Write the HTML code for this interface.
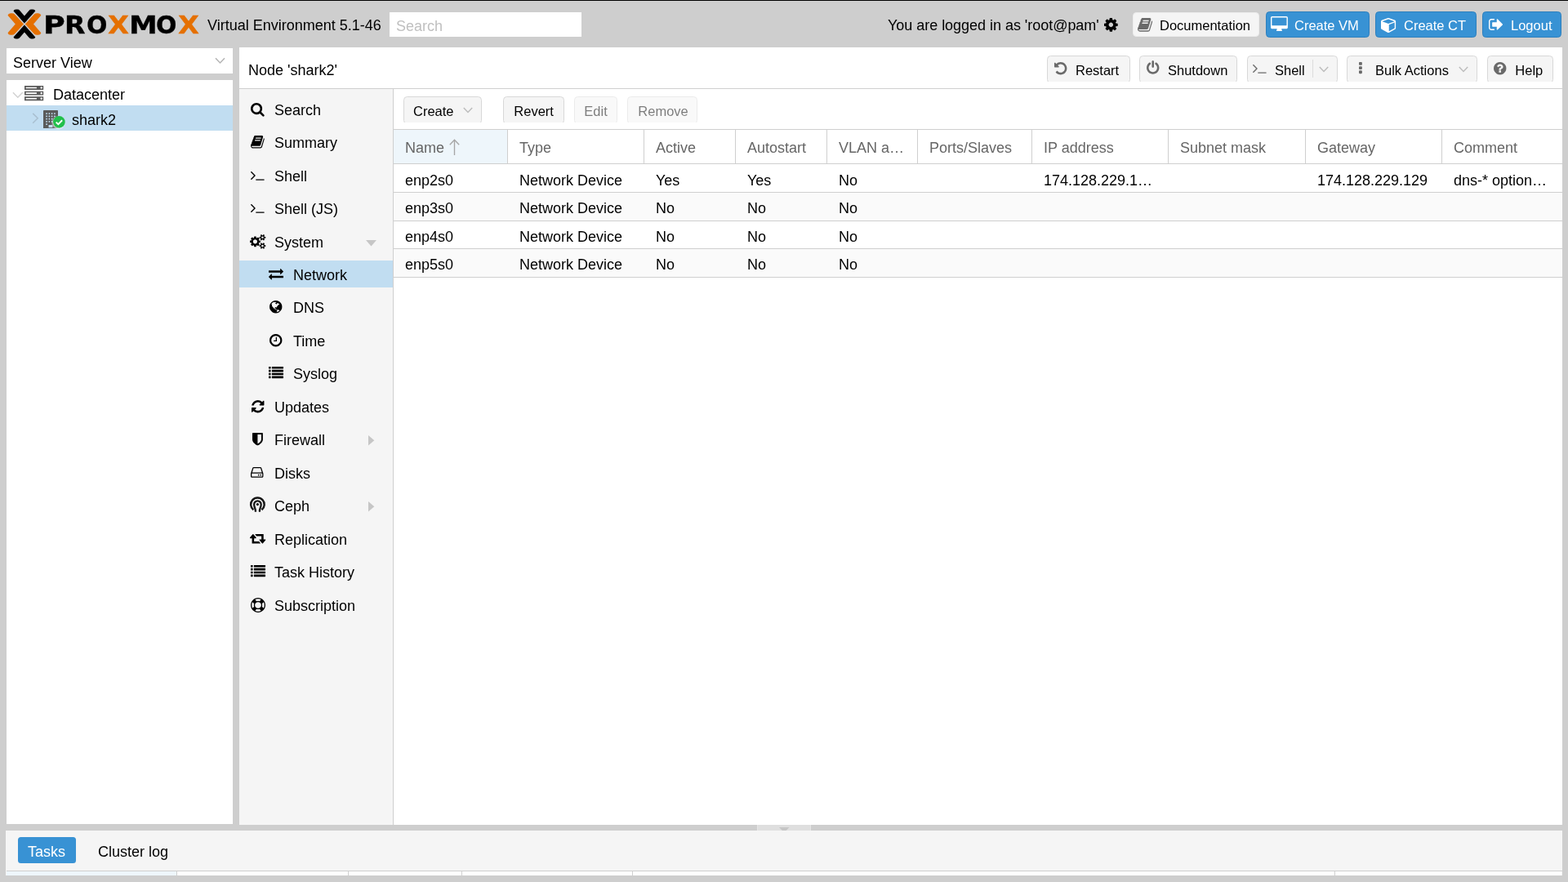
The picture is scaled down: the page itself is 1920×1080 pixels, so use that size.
<!DOCTYPE html>
<html lang="en">
<head>
<meta charset="utf-8">
<title>shark2 - Proxmox Virtual Environment</title>
<style>
html,body{margin:0;padding:0;}
body{width:1920px;height:1080px;overflow:hidden;position:relative;background:#cecece;
 font-family:"Liberation Sans",sans-serif;font-size:18px;line-height:18px;color:#000;}
#app{position:absolute;left:0;top:0;width:1920px;height:1080px;overflow:hidden;will-change:transform;}
#app div,#app svg,.g{position:absolute;box-sizing:border-box;}
.g{left:0;top:0;width:0;height:0;}
#app .in{position:static;}
.t{white-space:nowrap;}
.i{display:block;overflow:visible;}
.btn{background:#f5f5f5;border:1px solid #d8d8d8;border-radius:4.5px;}
.btnb{background:#3892d4;border:1px solid #2d7fbd;border-radius:4.5px;}
.dis{opacity:.5;}
.logo{font-family:"DejaVu Sans","Liberation Sans",sans-serif;font-weight:bold;font-size:30px;line-height:30px;}
.logo span{position:absolute;display:block;transform-origin:0 0;white-space:pre;}
</style>
</head>
<body>
<div id="app">
<div class="g topline">
<div style="left:0px;top:0px;width:1920px;height:1px;background:#000;"></div>
</div>
<header class="g hdr">
<svg class="i" style="left:0;top:0;filter:blur(0.3px);" width="60" height="58" viewBox="0 0 60 58"><path d="M16.5 13.5 Q17.1 11.6 19.5 11.6 L21.6 11.6 Q23.2 11.6 24.3 12.9 L29.9 19.5 L35.5 12.9 Q36.6 11.6 38.2 11.6 L40.3 11.6 Q42.7 11.6 43.3 13.5 L29.9 28.5 Z" fill="#000"/><path d="M16.5 45.5 Q17.1 47.4 19.5 47.4 L21.6 47.4 Q23.2 47.4 24.3 46.1 L29.9 39.5 L35.5 46.1 Q36.6 47.4 38.2 47.4 L40.3 47.4 Q42.7 47.4 43.3 45.5 L29.9 30.5 Z" fill="#000"/><path d="M9.5 18.7 Q10.1 16.2 13 16.2 L14.7 16.2 Q16.7 16.2 18 17.6 L29 29.5 L18 41.4 Q16.7 42.8 14.7 42.8 L13 42.8 Q10.1 42.8 9.5 40.3 L18.8 29.5 Z" fill="#e57000"/><path d="M50.3 18.7 Q49.7 16.2 46.8 16.2 L45.1 16.2 Q43.1 16.2 41.8 17.6 L30.8 29.5 L41.8 41.4 Q43.1 42.8 45.1 42.8 L46.8 42.8 Q49.7 42.8 50.3 40.3 L41 29.5 Z" fill="#e57000"/></svg>
<div class="logo" style="left:0;top:0;width:250px;height:58px;filter:blur(0.3px);"><span style="left:52.55px;top:16px;transform:scaleX(1.2165);color:#000;-webkit-text-stroke:0.35px #000;">P</span><span style="left:78.76px;top:16px;transform:scaleX(1.1040);color:#000;-webkit-text-stroke:0.35px #000;">R</span><span style="left:105.51px;top:16px;transform:scaleX(0.9956);color:#000;-webkit-text-stroke:0.35px #000;">O</span><span style="left:132.26px;top:16px;transform:scaleX(1.1249);color:#e57000;-webkit-text-stroke:0.35px #e57000;">X</span><span style="left:157.90px;top:16px;transform:scaleX(1.1631);color:#000;-webkit-text-stroke:0.35px #000;">M</span><span style="left:191.11px;top:16px;transform:scaleX(0.9956);color:#000;-webkit-text-stroke:0.35px #000;">O</span><span style="left:217.66px;top:16px;transform:scaleX(1.1203);color:#e57000;-webkit-text-stroke:0.35px #e57000;">X</span></div>
<div class="t" style="left:254px;top:22px;color:#000;">Virtual Environment 5.1-46</div>
<div style="left:477px;top:15px;width:235px;height:30px;background:#fff;"></div>
<div class="t" style="left:485px;top:23px;color:#c0c0c0;">Search</div>
<div class="t" style="left:1087px;top:22px;color:#000;letter-spacing:-0.03px;">You are logged in as 'root@pam'</div>
<svg class="i" style="left:1352px;top:21.5px;" width="16.71" height="16.71" viewBox="0 -1408 1536 1536"><path fill="#000" transform="scale(1,-1)" d="M1024 640q0 106 -75 181t-181 75t-181 -75t-75 -181t75 -181t181 -75t181 75t75 181zM1536 749v-222q0 -12 -8 -23t-20 -13l-185 -28q-19 -54 -39 -91q35 -50 107 -138q10 -12 10 -25t-9 -23q-27 -37 -99 -108t-94 -71q-12 0 -26 9l-138 108q-44 -23 -91 -38 q-16 -136 -29 -186q-7 -28 -36 -28h-222q-14 0 -24.5 8.5t-11.5 21.5l-28 184q-49 16 -90 37l-141 -107q-10 -9 -25 -9q-14 0 -25 11q-126 114 -165 168q-7 10 -7 23q0 12 8 23q15 21 51 66.5t54 70.5q-27 50 -41 99l-183 27q-13 2 -21 12.5t-8 23.5v222q0 12 8 23t19 13 l186 28q14 46 39 92q-40 57 -107 138q-10 12 -10 24q0 10 9 23q26 36 98.5 107.5t94.5 71.5q13 0 26 -10l138 -107q44 23 91 38q16 136 29 186q7 28 36 28h222q14 0 24.5 -8.5t11.5 -21.5l28 -184q49 -16 90 -37l142 107q9 9 24 9q13 0 25 -10q129 -119 165 -170q7 -8 7 -22 q0 -12 -8 -23q-15 -21 -51 -66.5t-54 -70.5q26 -50 41 -98l183 -28q13 -2 21 -12.5t8 -23.5z"/></svg>
<div class="btn" style="left:1386.6px;top:15px;width:155.6px;height:30.3px;border-color:#ececec;"></div>
<svg class="i" style="left:1393px;top:22px;" width="18.12" height="16.71" viewBox="-1 -1408 1665 1536"><path fill="#6a6a6a" transform="scale(1,-1)" d="M1639 1058q40 -57 18 -129l-275 -906q-19 -64 -76.5 -107.5t-122.5 -43.5h-923q-77 0 -148.5 53.5t-99.5 131.5q-24 67 -2 127q0 4 3 27t4 37q1 8 -3 21.5t-3 19.5q2 11 8 21t16.5 23.5t16.5 23.5q23 38 45 91.5t30 91.5q3 10 0.5 30t-0.5 28q3 11 17 28t17 23 q21 36 42 92t25 90q1 9 -2.5 32t0.5 28q4 13 22 30.5t22 22.5q19 26 42.5 84.5t27.5 96.5q1 8 -3 25.5t-2 26.5q2 8 9 18t18 23t17 21q8 12 16.5 30.5t15 35t16 36t19.5 32t26.5 23.5t36 11.5t47.5 -5.5l-1 -3q38 9 51 9h761q74 0 114 -56t18 -130l-274 -906 q-36 -119 -71.5 -153.5t-128.5 -34.5h-869q-27 0 -38 -15q-11 -16 -1 -43q24 -70 144 -70h923q29 0 56 15.5t35 41.5l300 987q7 22 5 57q38 -15 59 -43zM575 1056q-4 -13 2 -22.5t20 -9.5h608q13 0 25.5 9.5t16.5 22.5l21 64q4 13 -2 22.5t-20 9.5h-608q-13 0 -25.5 -9.5 t-16.5 -22.5zM492 800q-4 -13 2 -22.5t20 -9.5h608q13 0 25.5 9.5t16.5 22.5l21 64q4 13 -2 22.5t-20 9.5h-608q-13 0 -25.5 -9.5t-16.5 -22.5z"/></svg>
<div class="t" style="left:1420px;top:23px;color:#000;font-size:16.5px;line-height:16.5px;">Documentation</div>
<div class="btnb" style="left:1550px;top:14px;width:127px;height:32px;"></div>
<svg class="i" style="left:1556px;top:20px;" width="20.89" height="18.11" viewBox="0 -1536 1920 1664"><path fill="#fff" transform="scale(1,-1)" d="M1792 544v832q0 13 -9.5 22.5t-22.5 9.5h-1600q-13 0 -22.5 -9.5t-9.5 -22.5v-832q0 -13 9.5 -22.5t22.5 -9.5h1600q13 0 22.5 9.5t9.5 22.5zM1920 1376v-1088q0 -66 -47 -113t-113 -47h-544q0 -37 16 -77.5t32 -71t16 -43.5q0 -26 -19 -45t-45 -19h-512q-26 0 -45 19 t-19 45q0 14 16 44t32 70t16 78h-544q-66 0 -113 47t-47 113v1088q0 66 47 113t113 47h1600q66 0 113 -47t47 -113z"/></svg>
<div class="t" style="left:1585px;top:23px;color:#fff;font-size:16.5px;line-height:16.5px;">Create VM</div>
<div class="btnb" style="left:1684px;top:14px;width:124px;height:32px;"></div>
<svg class="i" style="left:1690.7px;top:21.6px;" width="18.11" height="18.11" viewBox="0 -1408 1664 1664"><path fill="#fff" transform="scale(1,-1)" d="M896 -93l640 349v636l-640 -233v-752zM832 772l698 254l-698 254l-698 -254zM1664 1024v-768q0 -35 -18 -65t-49 -47l-704 -384q-28 -16 -61 -16t-61 16l-704 384q-31 17 -49 47t-18 65v768q0 40 23 73t61 47l704 256q22 8 44 8t44 -8l704 -256q38 -14 61 -47t23 -73z"/></svg>
<div class="t" style="left:1719px;top:23px;color:#fff;font-size:16.5px;line-height:16.5px;">Create CT</div>
<div class="btnb" style="left:1815px;top:14px;width:97px;height:32px;"></div>
<svg class="i" style="left:1822.7px;top:23px;" width="17.06" height="13.93" viewBox="0 -1280 1568 1280"><path fill="#fff" transform="scale(1,-1)" d="M640 96q0 -4 1 -20t0.5 -26.5t-3 -23.5t-10 -19.5t-20.5 -6.5h-320q-119 0 -203.5 84.5t-84.5 203.5v704q0 119 84.5 203.5t203.5 84.5h320q13 0 22.5 -9.5t9.5 -22.5q0 -4 1 -20t0.5 -26.5t-3 -23.5t-10 -19.5t-20.5 -6.5h-320q-66 0 -113 -47t-47 -113v-704 q0 -66 47 -113t113 -47h288h11h13t11.5 -1t11.5 -3t8 -5.5t7 -9t2 -13.5zM1568 640q0 -26 -19 -45l-544 -544q-19 -19 -45 -19t-45 19t-19 45v288h-448q-26 0 -45 19t-19 45v384q0 26 19 45t45 19h448v288q0 26 19 45t45 19t45 -19l544 -544q19 -19 19 -45z"/></svg>
<div class="t" style="left:1850px;top:23px;color:#fff;font-size:16.5px;line-height:16.5px;">Logout</div>
</header>
<aside class="g west">
<div style="left:8px;top:59px;width:277px;height:31px;background:#fff;"></div>
<div class="t" style="left:16px;top:68px;color:#000;">Server View</div>
<svg class="i" style="left:263px;top:70px;" width="13" height="9" viewBox="0 0 13 9"><path d="M1 1.2 L6.5 7 L12 1.2" fill="none" stroke="#b4b4b4" stroke-width="1.5"/></svg>
<div style="left:8px;top:98px;width:277px;height:911px;background:#fff;"></div>
<div style="left:8px;top:129px;width:277px;height:31px;background:#c1ddf1;"></div>
<svg class="i" style="left:14.6px;top:111.8px;" width="13.6" height="9" viewBox="0 0 13.6 9"><path d="M0.9 1.2 L6.8 7.2 L12.7 1.2" fill="none" stroke="#d2d2d2" stroke-width="1.5"/></svg>
<svg class="i" style="left:30px;top:104.6px;" width="23.20" height="18.23" viewBox="0 -1408 1792 1408"><path fill="#5a5a5a" transform="scale(1,-1)" d="M128 128h1024v128h-1024v-128zM128 640h1024v128h-1024v-128zM1696 192q0 40 -28 68t-68 28t-68 -28t-28 -68t28 -68t68 -28t68 28t28 68zM128 1152h1024v128h-1024v-128zM1696 704q0 40 -28 68t-68 28t-68 -28t-28 -68t28 -68t68 -28t68 28t28 68zM1696 1216 q0 40 -28 68t-68 28t-68 -28t-28 -68t28 -68t68 -28t68 28t28 68zM1792 384v-384h-1792v384h1792zM1792 896v-384h-1792v384h1792zM1792 1408v-384h-1792v384h1792z"/></svg>
<div class="t" style="left:65px;top:107px;color:#000;">Datacenter</div>
<svg class="i" style="left:39px;top:138.2px;" width="9" height="13.6" viewBox="0 0 9 13.6"><path d="M1.2 0.9 L7.2 6.8 L1.2 12.7" fill="none" stroke="#a9bfd0" stroke-width="1.5"/></svg>
<svg class="i" style="left:53px;top:135px;overflow:hidden;" width="18" height="21.6" viewBox="0 -1536 1408 1690" preserveAspectRatio="xMinYMin slice"><path fill="#5a5a5a" transform="scale(1,-1)" d="M1344 1536q26 0 45 -19t19 -45v-1664q0 -26 -19 -45t-45 -19h-1280q-26 0 -45 19t-19 45v1664q0 26 19 45t45 19h1280zM512 1248v-64q0 -14 9 -23t23 -9h64q14 0 23 9t9 23v64q0 14 -9 23t-23 9h-64q-14 0 -23 -9t-9 -23zM512 992v-64q0 -14 9 -23t23 -9h64q14 0 23 9 t9 23v64q0 14 -9 23t-23 9h-64q-14 0 -23 -9t-9 -23zM512 736v-64q0 -14 9 -23t23 -9h64q14 0 23 9t9 23v64q0 14 -9 23t-23 9h-64q-14 0 -23 -9t-9 -23zM512 480v-64q0 -14 9 -23t23 -9h64q14 0 23 9t9 23v64q0 14 -9 23t-23 9h-64q-14 0 -23 -9t-9 -23zM384 160v64 q0 14 -9 23t-23 9h-64q-14 0 -23 -9t-9 -23v-64q0 -14 9 -23t23 -9h64q14 0 23 9t9 23zM384 416v64q0 14 -9 23t-23 9h-64q-14 0 -23 -9t-9 -23v-64q0 -14 9 -23t23 -9h64q14 0 23 9t9 23zM384 672v64q0 14 -9 23t-23 9h-64q-14 0 -23 -9t-9 -23v-64q0 -14 9 -23t23 -9h64 q14 0 23 9t9 23zM384 928v64q0 14 -9 23t-23 9h-64q-14 0 -23 -9t-9 -23v-64q0 -14 9 -23t23 -9h64q14 0 23 9t9 23zM384 1184v64q0 14 -9 23t-23 9h-64q-14 0 -23 -9t-9 -23v-64q0 -14 9 -23t23 -9h64q14 0 23 9t9 23zM896 -96v192q0 14 -9 23t-23 9h-320q-14 0 -23 -9 t-9 -23v-192q0 -14 9 -23t23 -9h320q14 0 23 9t9 23zM896 416v64q0 14 -9 23t-23 9h-64q-14 0 -23 -9t-9 -23v-64q0 -14 9 -23t23 -9h64q14 0 23 9t9 23zM896 672v64q0 14 -9 23t-23 9h-64q-14 0 -23 -9t-9 -23v-64q0 -14 9 -23t23 -9h64q14 0 23 9t9 23zM896 928v64 q0 14 -9 23t-23 9h-64q-14 0 -23 -9t-9 -23v-64q0 -14 9 -23t23 -9h64q14 0 23 9t9 23zM896 1184v64q0 14 -9 23t-23 9h-64q-14 0 -23 -9t-9 -23v-64q0 -14 9 -23t23 -9h64q14 0 23 9t9 23zM1152 160v64q0 14 -9 23t-23 9h-64q-14 0 -23 -9t-9 -23v-64q0 -14 9 -23t23 -9h64 q14 0 23 9t9 23zM1152 416v64q0 14 -9 23t-23 9h-64q-14 0 -23 -9t-9 -23v-64q0 -14 9 -23t23 -9h64q14 0 23 9t9 23zM1152 672v64q0 14 -9 23t-23 9h-64q-14 0 -23 -9t-9 -23v-64q0 -14 9 -23t23 -9h64q14 0 23 9t9 23zM1152 928v64q0 14 -9 23t-23 9h-64q-14 0 -23 -9 t-9 -23v-64q0 -14 9 -23t23 -9h64q14 0 23 9t9 23zM1152 1184v64q0 14 -9 23t-23 9h-64q-14 0 -23 -9t-9 -23v-64q0 -14 9 -23t23 -9h64q14 0 23 9t9 23z"/></svg>
<svg class="i" style="left:64.6px;top:141.7px;filter:drop-shadow(-1px 1px 1.2px rgba(255,255,255,.85));" width="14.8" height="14.8" viewBox="0 0 15 15"><circle cx="7.5" cy="7.5" r="7.4" fill="#21bf4b"/><path d="M3.7 7.7 L6.4 10.3 L11.3 5.3" fill="none" stroke="#fff" stroke-width="1.9"/></svg>
<div class="t" style="left:88px;top:138px;color:#000;">shark2</div>
</aside>
<section class="g titlebar">
<div style="left:293px;top:58px;width:1620px;height:952px;background:#fff;"></div>
<div class="t" style="left:304px;top:77px;color:#000;">Node 'shark2'</div>
<div style="left:293px;top:108px;width:1620px;height:1px;background:#cfcfcf;"></div>
<div style="left:1282px;top:68px;width:102px;height:32px;overflow:hidden;"><div class="btn in" style="width:102px;height:33.5px;"></div></div>
<svg class="i" style="left:1291px;top:76px;" width="15.43" height="15.43" viewBox="0 -1408 1536 1536"><path fill="#6a6a6a" transform="scale(1,-1)" d="M1536 640q0 -156 -61 -298t-164 -245t-245 -164t-298 -61q-172 0 -327 72.5t-264 204.5q-7 10 -6.5 22.5t8.5 20.5l137 138q10 9 25 9q16 -2 23 -12q73 -95 179 -147t225 -52q104 0 198.5 40.5t163.5 109.5t109.5 163.5t40.5 198.5t-40.5 198.5t-109.5 163.5 t-163.5 109.5t-198.5 40.5q-98 0 -188 -35.5t-160 -101.5l137 -138q31 -30 14 -69q-17 -40 -59 -40h-448q-26 0 -45 19t-19 45v448q0 42 40 59q39 17 69 -14l130 -129q107 101 244.5 156.5t284.5 55.5q156 0 298 -61t245 -164t164 -245t61 -298z"/></svg>
<div class="t" style="left:1317px;top:78px;color:#000;font-size:16.5px;line-height:16.5px;">Restart</div>
<div style="left:1395px;top:68px;width:120px;height:32px;overflow:hidden;"><div class="btn in" style="width:120px;height:33.5px;"></div></div>
<svg class="i" style="left:1404px;top:73.8px;" width="15.43" height="16.71" viewBox="0 -1536 1536 1664"><path fill="#6a6a6a" transform="scale(1,-1)" d="M1536 640q0 -156 -61 -298t-164 -245t-245 -164t-298 -61t-298 61t-245 164t-164 245t-61 298q0 182 80.5 343t226.5 270q43 32 95.5 25t83.5 -50q32 -42 24.5 -94.5t-49.5 -84.5q-98 -74 -151.5 -181t-53.5 -228q0 -104 40.5 -198.5t109.5 -163.5t163.5 -109.5 t198.5 -40.5t198.5 40.5t163.5 109.5t109.5 163.5t40.5 198.5q0 121 -53.5 228t-151.5 181q-42 32 -49.5 84.5t24.5 94.5q31 43 84 50t95 -25q146 -109 226.5 -270t80.5 -343zM896 1408v-640q0 -52 -38 -90t-90 -38t-90 38t-38 90v640q0 52 38 90t90 38t90 -38t38 -90z"/></svg>
<div class="t" style="left:1430px;top:78px;color:#000;font-size:16.5px;line-height:16.5px;">Shutdown</div>
<div style="left:1527px;top:68px;width:111px;height:32px;overflow:hidden;"><div class="btn in" style="width:111px;height:33.5px;"></div></div>
<svg class="i" style="left:1533.7px;top:79.3px;" width="16.58" height="10.80" viewBox="13 -1075 1651 1075"><path fill="#6a6a6a" transform="scale(1,-1)" d="M585 553l-466 -466q-10 -10 -23 -10t-23 10l-50 50q-10 10 -10 23t10 23l393 393l-393 393q-10 10 -10 23t10 23l50 50q10 10 23 10t23 -10l466 -466q10 -10 10 -23t-10 -23zM1664 96v-64q0 -14 -9 -23t-23 -9h-960q-14 0 -23 9t-9 23v64q0 14 9 23t23 9h960q14 0 23 -9 t9 -23z"/></svg>
<div class="t" style="left:1561px;top:78px;color:#000;font-size:16.5px;line-height:16.5px;">Shell</div>
<div style="left:1607px;top:73px;width:1px;height:22px;background:#dcdcdc;"></div>
<svg class="i" style="left:1615px;top:81px;" width="12" height="8" viewBox="0 0 12 8"><path d="M0.8 0.9 L6 6.4 L11.2 0.9" fill="none" stroke="#bdbdbd" stroke-width="1.5"/></svg>
<div style="left:1649px;top:68px;width:160px;height:32px;overflow:hidden;"><div class="btn in" style="width:160px;height:33.5px;"></div></div>
<svg class="i" style="left:1663.7px;top:76px;" width="3.86" height="14.14" viewBox="0 -1408 384 1408"><path fill="#6a6a6a" transform="scale(1,-1)" d="M384 288v-192q0 -40 -28 -68t-68 -28h-192q-40 0 -68 28t-28 68v192q0 40 28 68t68 28h192q40 0 68 -28t28 -68zM384 800v-192q0 -40 -28 -68t-68 -28h-192q-40 0 -68 28t-28 68v192q0 40 28 68t68 28h192q40 0 68 -28t28 -68zM384 1312v-192q0 -40 -28 -68t-68 -28h-192 q-40 0 -68 28t-28 68v192q0 40 28 68t68 28h192q40 0 68 -28t28 -68z"/></svg>
<div class="t" style="left:1684px;top:78px;color:#000;font-size:16.5px;line-height:16.5px;">Bulk Actions</div>
<svg class="i" style="left:1786px;top:81px;" width="12" height="8" viewBox="0 0 12 8"><path d="M0.8 0.9 L6 6.4 L11.2 0.9" fill="none" stroke="#bdbdbd" stroke-width="1.5"/></svg>
<div style="left:1821px;top:68px;width:81px;height:32px;overflow:hidden;"><div class="btn in" style="width:81px;height:33.5px;"></div></div>
<svg class="i" style="left:1829px;top:75.7px;" width="15.43" height="15.43" viewBox="0 -1408 1536 1536"><path fill="#6a6a6a" transform="scale(1,-1)" d="M896 160v192q0 14 -9 23t-23 9h-192q-14 0 -23 -9t-9 -23v-192q0 -14 9 -23t23 -9h192q14 0 23 9t9 23zM1152 832q0 88 -55.5 163t-138.5 116t-170 41q-243 0 -371 -213q-15 -24 8 -42l132 -100q7 -6 19 -6q16 0 25 12q53 68 86 92q34 24 86 24q48 0 85.5 -26t37.5 -59 q0 -38 -20 -61t-68 -45q-63 -28 -115.5 -86.5t-52.5 -125.5v-36q0 -14 9 -23t23 -9h192q14 0 23 9t9 23q0 19 21.5 49.5t54.5 49.5q32 18 49 28.5t46 35t44.5 48t28 60.5t12.5 81zM1536 640q0 -209 -103 -385.5t-279.5 -279.5t-385.5 -103t-385.5 103t-279.5 279.5 t-103 385.5t103 385.5t279.5 279.5t385.5 103t385.5 -103t279.5 -279.5t103 -385.5z"/></svg>
<div class="t" style="left:1855.3px;top:78px;color:#000;font-size:16.5px;line-height:16.5px;">Help</div>
</section>
<nav class="g navlist">
<div style="left:293px;top:109px;width:188px;height:901px;background:#f5f5f5;"></div>
<div style="left:481px;top:109px;width:1px;height:901px;background:#cfcfcf;"></div>
<div style="left:293px;top:319px;width:188px;height:33px;background:#c1ddf1;"></div>
<svg class="i" style="left:307.14px;top:125.86px;" width="16.71" height="16.71" viewBox="0 -1408 1664 1664"><path fill="#000" transform="scale(1,-1)" d="M1152 704q0 185 -131.5 316.5t-316.5 131.5t-316.5 -131.5t-131.5 -316.5t131.5 -316.5t316.5 -131.5t316.5 131.5t131.5 316.5zM1664 -128q0 -52 -38 -90t-90 -38q-54 0 -90 38l-343 342q-179 -124 -399 -124q-143 0 -273.5 55.5t-225 150t-150 225t-55.5 273.5 t55.5 273.5t150 225t225 150t273.5 55.5t273.5 -55.5t225 -150t150 -225t55.5 -273.5q0 -220 -124 -399l343 -343q37 -37 37 -90z"/></svg>
<div class="t" style="left:336px;top:126px;color:#000;">Search</div>
<svg class="i" style="left:307.14px;top:165.86px;" width="16.73" height="15.43" viewBox="-1 -1408 1665 1536"><path fill="#000" transform="scale(1,-1)" d="M1639 1058q40 -57 18 -129l-275 -906q-19 -64 -76.5 -107.5t-122.5 -43.5h-923q-77 0 -148.5 53.5t-99.5 131.5q-24 67 -2 127q0 4 3 27t4 37q1 8 -3 21.5t-3 19.5q2 11 8 21t16.5 23.5t16.5 23.5q23 38 45 91.5t30 91.5q3 10 0.5 30t-0.5 28q3 11 17 28t17 23 q21 36 42 92t25 90q1 9 -2.5 32t0.5 28q4 13 22 30.5t22 22.5q19 26 42.5 84.5t27.5 96.5q1 8 -3 25.5t-2 26.5q2 8 9 18t18 23t17 21q8 12 16.5 30.5t15 35t16 36t19.5 32t26.5 23.5t36 11.5t47.5 -5.5l-1 -3q38 9 51 9h761q74 0 114 -56t18 -130l-274 -906 q-36 -119 -71.5 -153.5t-128.5 -34.5h-869q-27 0 -38 -15q-11 -16 -1 -43q24 -70 144 -70h923q29 0 56 15.5t35 41.5l300 987q7 22 5 57q38 -15 59 -43zM575 1056q-4 -13 2 -22.5t20 -9.5h608q13 0 25.5 9.5t16.5 22.5l21 64q4 13 -2 22.5t-20 9.5h-608q-13 0 -25.5 -9.5 t-16.5 -22.5zM492 800q-4 -13 2 -22.5t20 -9.5h608q13 0 25.5 9.5t16.5 22.5l21 64q4 13 -2 22.5t-20 9.5h-608q-13 0 -25.5 -9.5t-16.5 -22.5z"/></svg>
<div class="t" style="left:336px;top:166px;color:#000;">Summary</div>
<svg class="i" style="left:307.27px;top:210.2px;" width="16.58" height="10.80" viewBox="13 -1075 1651 1075"><path fill="#000" transform="scale(1,-1)" d="M585 553l-466 -466q-10 -10 -23 -10t-23 10l-50 50q-10 10 -10 23t10 23l393 393l-393 393q-10 10 -10 23t10 23l50 50q10 10 23 10t23 -10l466 -466q10 -10 10 -23t-10 -23zM1664 96v-64q0 -14 -9 -23t-23 -9h-960q-14 0 -23 9t-9 23v64q0 14 9 23t23 9h960q14 0 23 -9 t9 -23z"/></svg>
<div class="t" style="left:336px;top:207px;color:#000;">Shell</div>
<svg class="i" style="left:307.27px;top:250.2px;" width="16.58" height="10.80" viewBox="13 -1075 1651 1075"><path fill="#000" transform="scale(1,-1)" d="M585 553l-466 -466q-10 -10 -23 -10t-23 10l-50 50q-10 10 -10 23t10 23l393 393l-393 393q-10 10 -10 23t10 23l50 50q10 10 23 10t23 -10l466 -466q10 -10 10 -23t-10 -23zM1664 96v-64q0 -14 -9 -23t-23 -9h-960q-14 0 -23 9t-9 23v64q0 14 9 23t23 9h960q14 0 23 -9 t9 -23z"/></svg>
<div class="t" style="left:336px;top:247px;color:#000;">Shell (JS)</div>
<svg class="i" style="left:305.86px;top:286.73px;" width="19.29" height="17.69" viewBox="0 -1520 1920 1761"><path fill="#000" transform="scale(1,-1)" d="M896 640q0 106 -75 181t-181 75t-181 -75t-75 -181t75 -181t181 -75t181 75t75 181zM1664 128q0 52 -38 90t-90 38t-90 -38t-38 -90q0 -53 37.5 -90.5t90.5 -37.5t90.5 37.5t37.5 90.5zM1664 1152q0 52 -38 90t-90 38t-90 -38t-38 -90q0 -53 37.5 -90.5t90.5 -37.5 t90.5 37.5t37.5 90.5zM1280 731v-185q0 -10 -7 -19.5t-16 -10.5l-155 -24q-11 -35 -32 -76q34 -48 90 -115q7 -11 7 -20q0 -12 -7 -19q-23 -30 -82.5 -89.5t-78.5 -59.5q-11 0 -21 7l-115 90q-37 -19 -77 -31q-11 -108 -23 -155q-7 -24 -30 -24h-186q-11 0 -20 7.5t-10 17.5 l-23 153q-34 10 -75 31l-118 -89q-7 -7 -20 -7q-11 0 -21 8q-144 133 -144 160q0 9 7 19q10 14 41 53t47 61q-23 44 -35 82l-152 24q-10 1 -17 9.5t-7 19.5v185q0 10 7 19.5t16 10.5l155 24q11 35 32 76q-34 48 -90 115q-7 11 -7 20q0 12 7 20q22 30 82 89t79 59q11 0 21 -7 l115 -90q34 18 77 32q11 108 23 154q7 24 30 24h186q11 0 20 -7.5t10 -17.5l23 -153q34 -10 75 -31l118 89q8 7 20 7q11 0 21 -8q144 -133 144 -160q0 -8 -7 -19q-12 -16 -42 -54t-45 -60q23 -48 34 -82l152 -23q10 -2 17 -10.5t7 -19.5zM1920 198v-140q0 -16 -149 -31 q-12 -27 -30 -52q51 -113 51 -138q0 -4 -4 -7q-122 -71 -124 -71q-8 0 -46 47t-52 68q-20 -2 -30 -2t-30 2q-14 -21 -52 -68t-46 -47q-2 0 -124 71q-4 3 -4 7q0 25 51 138q-18 25 -30 52q-149 15 -149 31v140q0 16 149 31q13 29 30 52q-51 113 -51 138q0 4 4 7q4 2 35 20 t59 34t30 16q8 0 46 -46.5t52 -67.5q20 2 30 2t30 -2q51 71 92 112l6 2q4 0 124 -70q4 -3 4 -7q0 -25 -51 -138q17 -23 30 -52q149 -15 149 -31zM1920 1222v-140q0 -16 -149 -31q-12 -27 -30 -52q51 -113 51 -138q0 -4 -4 -7q-122 -71 -124 -71q-8 0 -46 47t-52 68 q-20 -2 -30 -2t-30 2q-14 -21 -52 -68t-46 -47q-2 0 -124 71q-4 3 -4 7q0 25 51 138q-18 25 -30 52q-149 15 -149 31v140q0 16 149 31q13 29 30 52q-51 113 -51 138q0 4 4 7q4 2 35 20t59 34t30 16q8 0 46 -46.5t52 -67.5q20 2 30 2t30 -2q51 71 92 112l6 2q4 0 124 -70 q4 -3 4 -7q0 -25 -51 -138q17 -23 30 -52q149 -15 149 -31z"/></svg>
<div class="t" style="left:336px;top:288px;color:#000;">System</div>
<svg class="i" style="left:328.9px;top:329.46px;" width="18.00" height="13.50" viewBox="0 -1248 1792 1344"><path fill="#000" transform="scale(1,-1)" d="M1792 352v-192q0 -13 -9.5 -22.5t-22.5 -9.5h-1376v-192q0 -13 -9.5 -22.5t-22.5 -9.5q-12 0 -24 10l-319 320q-9 9 -9 22q0 14 9 23l320 320q9 9 23 9q13 0 22.5 -9.5t9.5 -22.5v-192h1376q13 0 22.5 -9.5t9.5 -22.5zM1792 896q0 -14 -9 -23l-320 -320q-9 -9 -23 -9 q-13 0 -22.5 9.5t-9.5 22.5v192h-1376q-13 0 -22.5 9.5t-9.5 22.5v192q0 13 9.5 22.5t22.5 9.5h1376v192q0 14 9 23t23 9q12 0 24 -10l319 -319q9 -9 9 -23z"/></svg>
<div class="t" style="left:359px;top:328px;color:#000;">Network</div>
<svg class="i" style="left:330.19px;top:367.86px;" width="15.43" height="15.43" viewBox="0 -1408 1536 1536"><path fill="#000" transform="scale(1,-1)" d="M768 1408q209 0 385.5 -103t279.5 -279.5t103 -385.5t-103 -385.5t-279.5 -279.5t-385.5 -103t-385.5 103t-279.5 279.5t-103 385.5t103 385.5t279.5 279.5t385.5 103zM1042 887q-2 -1 -9.5 -9.5t-13.5 -9.5q2 0 4.5 5t5 11t3.5 7q6 7 22 15q14 6 52 12q34 8 51 -11 q-2 2 9.5 13t14.5 12q3 2 15 4.5t15 7.5l2 22q-12 -1 -17.5 7t-6.5 21q0 -2 -6 -8q0 7 -4.5 8t-11.5 -1t-9 -1q-10 3 -15 7.5t-8 16.5t-4 15q-2 5 -9.5 11t-9.5 10q-1 2 -2.5 5.5t-3 6.5t-4 5.5t-5.5 2.5t-7 -5t-7.5 -10t-4.5 -5q-3 2 -6 1.5t-4.5 -1t-4.5 -3t-5 -3.5 q-3 -2 -8.5 -3t-8.5 -2q15 5 -1 11q-10 4 -16 3q9 4 7.5 12t-8.5 14h5q-1 4 -8.5 8.5t-17.5 8.5t-13 6q-8 5 -34 9.5t-33 0.5q-5 -6 -4.5 -10.5t4 -14t3.5 -12.5q1 -6 -5.5 -13t-6.5 -12q0 -7 14 -15.5t10 -21.5q-3 -8 -16 -16t-16 -12q-5 -8 -1.5 -18.5t10.5 -16.5 q2 -2 1.5 -4t-3.5 -4.5t-5.5 -4t-6.5 -3.5l-3 -2q-11 -5 -20.5 6t-13.5 26q-7 25 -16 30q-23 8 -29 -1q-5 13 -41 26q-25 9 -58 4q6 1 0 15q-7 15 -19 12q3 6 4 17.5t1 13.5q3 13 12 23q1 1 7 8.5t9.5 13.5t0.5 6q35 -4 50 11q5 5 11.5 17t10.5 17q9 6 14 5.5t14.5 -5.5 t14.5 -5q14 -1 15.5 11t-7.5 20q12 -1 3 17q-4 7 -8 9q-12 4 -27 -5q-8 -4 2 -8q-1 1 -9.5 -10.5t-16.5 -17.5t-16 5q-1 1 -5.5 13.5t-9.5 13.5q-8 0 -16 -15q3 8 -11 15t-24 8q19 12 -8 27q-7 4 -20.5 5t-19.5 -4q-5 -7 -5.5 -11.5t5 -8t10.5 -5.5t11.5 -4t8.5 -3 q14 -10 8 -14q-2 -1 -8.5 -3.5t-11.5 -4.5t-6 -4q-3 -4 0 -14t-2 -14q-5 5 -9 17.5t-7 16.5q7 -9 -25 -6l-10 1q-4 0 -16 -2t-20.5 -1t-13.5 8q-4 8 0 20q1 4 4 2q-4 3 -11 9.5t-10 8.5q-46 -15 -94 -41q6 -1 12 1q5 2 13 6.5t10 5.5q34 14 42 7l5 5q14 -16 20 -25 q-7 4 -30 1q-20 -6 -22 -12q7 -12 5 -18q-4 3 -11.5 10t-14.5 11t-15 5q-16 0 -22 -1q-146 -80 -235 -222q7 -7 12 -8q4 -1 5 -9t2.5 -11t11.5 3q9 -8 3 -19q1 1 44 -27q19 -17 21 -21q3 -11 -10 -18q-1 2 -9 9t-9 4q-3 -5 0.5 -18.5t10.5 -12.5q-7 0 -9.5 -16t-2.5 -35.5 t-1 -23.5l2 -1q-3 -12 5.5 -34.5t21.5 -19.5q-13 -3 20 -43q6 -8 8 -9q3 -2 12 -7.5t15 -10t10 -10.5q4 -5 10 -22.5t14 -23.5q-2 -6 9.5 -20t10.5 -23q-1 0 -2.5 -1t-2.5 -1q3 -7 15.5 -14t15.5 -13q1 -3 2 -10t3 -11t8 -2q2 20 -24 62q-15 25 -17 29q-3 5 -5.5 15.5 t-4.5 14.5q2 0 6 -1.5t8.5 -3.5t7.5 -4t2 -3q-3 -7 2 -17.5t12 -18.5t17 -19t12 -13q6 -6 14 -19.5t0 -13.5q9 0 20 -10.5t17 -19.5q5 -8 8 -26t5 -24q2 -7 8.5 -13.5t12.5 -9.5l16 -8t13 -7q5 -2 18.5 -10.5t21.5 -11.5q10 -4 16 -4t14.5 2.5t13.5 3.5q15 2 29 -15t21 -21 q36 -19 55 -11q-2 -1 0.5 -7.5t8 -15.5t9 -14.5t5.5 -8.5q5 -6 18 -15t18 -15q6 4 7 9q-3 -8 7 -20t18 -10q14 3 14 32q-31 -15 -49 18q0 1 -2.5 5.5t-4 8.5t-2.5 8.5t0 7.5t5 3q9 0 10 3.5t-2 12.5t-4 13q-1 8 -11 20t-12 15q-5 -9 -16 -8t-16 9q0 -1 -1.5 -5.5t-1.5 -6.5 q-13 0 -15 1q1 3 2.5 17.5t3.5 22.5q1 4 5.5 12t7.5 14.5t4 12.5t-4.5 9.5t-17.5 2.5q-19 -1 -26 -20q-1 -3 -3 -10.5t-5 -11.5t-9 -7q-7 -3 -24 -2t-24 5q-13 8 -22.5 29t-9.5 37q0 10 2.5 26.5t3 25t-5.5 24.5q3 2 9 9.5t10 10.5q2 1 4.5 1.5t4.5 0t4 1.5t3 6q-1 1 -4 3 q-3 3 -4 3q7 -3 28.5 1.5t27.5 -1.5q15 -11 22 2q0 1 -2.5 9.5t-0.5 13.5q5 -27 29 -9q3 -3 15.5 -5t17.5 -5q3 -2 7 -5.5t5.5 -4.5t5 0.5t8.5 6.5q10 -14 12 -24q11 -40 19 -44q7 -3 11 -2t4.5 9.5t0 14t-1.5 12.5l-1 8v18l-1 8q-15 3 -18.5 12t1.5 18.5t15 18.5q1 1 8 3.5 t15.5 6.5t12.5 8q21 19 15 35q7 0 11 9q-1 0 -5 3t-7.5 5t-4.5 2q9 5 2 16q5 3 7.5 11t7.5 10q9 -12 21 -2q8 8 1 16q5 7 20.5 10.5t18.5 9.5q7 -2 8 2t1 12t3 12q4 5 15 9t13 5l17 11q3 4 0 4q18 -2 31 11q10 11 -6 20q3 6 -3 9.5t-15 5.5q3 1 11.5 0.5t10.5 1.5 q15 10 -7 16q-17 5 -43 -12zM879 10q206 36 351 189q-3 3 -12.5 4.5t-12.5 3.5q-18 7 -24 8q1 7 -2.5 13t-8 9t-12.5 8t-11 7q-2 2 -7 6t-7 5.5t-7.5 4.5t-8.5 2t-10 -1l-3 -1q-3 -1 -5.5 -2.5t-5.5 -3t-4 -3t0 -2.5q-21 17 -36 22q-5 1 -11 5.5t-10.5 7t-10 1.5t-11.5 -7 q-5 -5 -6 -15t-2 -13q-7 5 0 17.5t2 18.5q-3 6 -10.5 4.5t-12 -4.5t-11.5 -8.5t-9 -6.5t-8.5 -5.5t-8.5 -7.5q-3 -4 -6 -12t-5 -11q-2 4 -11.5 6.5t-9.5 5.5q2 -10 4 -35t5 -38q7 -31 -12 -48q-27 -25 -29 -40q-4 -22 12 -26q0 -7 -8 -20.5t-7 -21.5q0 -6 2 -16z"/></svg>
<div class="t" style="left:359px;top:368px;color:#000;">DNS</div>
<svg class="i" style="left:330.19px;top:408.86px;" width="15.43" height="15.43" viewBox="0 -1408 1536 1536"><path fill="#000" transform="scale(1,-1)" d="M896 992v-448q0 -14 -9 -23t-23 -9h-320q-14 0 -23 9t-9 23v64q0 14 9 23t23 9h224v352q0 14 9 23t23 9h64q14 0 23 -9t9 -23zM1312 640q0 148 -73 273t-198 198t-273 73t-273 -73t-198 -198t-73 -273t73 -273t198 -198t273 -73t273 73t198 198t73 273zM1536 640 q0 -209 -103 -385.5t-279.5 -279.5t-385.5 -103t-385.5 103t-279.5 279.5t-103 385.5t103 385.5t279.5 279.5t385.5 103t385.5 -103t279.5 -279.5t103 -385.5z"/></svg>
<div class="t" style="left:359px;top:409px;color:#000;">Time</div>
<svg class="i" style="left:328.9px;top:448.86px;" width="18.00" height="14.14" viewBox="0 -1408 1792 1408"><path fill="#000" transform="scale(1,-1)" d="M256 224v-192q0 -13 -9.5 -22.5t-22.5 -9.5h-192q-13 0 -22.5 9.5t-9.5 22.5v192q0 13 9.5 22.5t22.5 9.5h192q13 0 22.5 -9.5t9.5 -22.5zM256 608v-192q0 -13 -9.5 -22.5t-22.5 -9.5h-192q-13 0 -22.5 9.5t-9.5 22.5v192q0 13 9.5 22.5t22.5 9.5h192q13 0 22.5 -9.5 t9.5 -22.5zM256 992v-192q0 -13 -9.5 -22.5t-22.5 -9.5h-192q-13 0 -22.5 9.5t-9.5 22.5v192q0 13 9.5 22.5t22.5 9.5h192q13 0 22.5 -9.5t9.5 -22.5zM1792 224v-192q0 -13 -9.5 -22.5t-22.5 -9.5h-1344q-13 0 -22.5 9.5t-9.5 22.5v192q0 13 9.5 22.5t22.5 9.5h1344 q13 0 22.5 -9.5t9.5 -22.5zM256 1376v-192q0 -13 -9.5 -22.5t-22.5 -9.5h-192q-13 0 -22.5 9.5t-9.5 22.5v192q0 13 9.5 22.5t22.5 9.5h192q13 0 22.5 -9.5t9.5 -22.5zM1792 608v-192q0 -13 -9.5 -22.5t-22.5 -9.5h-1344q-13 0 -22.5 9.5t-9.5 22.5v192q0 13 9.5 22.5 t22.5 9.5h1344q13 0 22.5 -9.5t9.5 -22.5zM1792 992v-192q0 -13 -9.5 -22.5t-22.5 -9.5h-1344q-13 0 -22.5 9.5t-9.5 22.5v192q0 13 9.5 22.5t22.5 9.5h1344q13 0 22.5 -9.5t9.5 -22.5zM1792 1376v-192q0 -13 -9.5 -22.5t-22.5 -9.5h-1344q-13 0 -22.5 9.5t-9.5 22.5v192 q0 13 9.5 22.5t22.5 9.5h1344q13 0 22.5 -9.5t9.5 -22.5z"/></svg>
<div class="t" style="left:359px;top:449px;color:#000;">Syslog</div>
<svg class="i" style="left:307.79px;top:489.86px;" width="15.43" height="15.43" viewBox="0 -1408 1536 1536"><path fill="#000" transform="scale(1,-1)" d="M1511 480q0 -5 -1 -7q-64 -268 -268 -434.5t-478 -166.5q-146 0 -282.5 55t-243.5 157l-129 -129q-19 -19 -45 -19t-45 19t-19 45v448q0 26 19 45t45 19h448q26 0 45 -19t19 -45t-19 -45l-137 -137q71 -66 161 -102t187 -36q134 0 250 65t186 179q11 17 53 117 q8 23 30 23h192q13 0 22.5 -9.5t9.5 -22.5zM1536 1280v-448q0 -26 -19 -45t-45 -19h-448q-26 0 -45 19t-19 45t19 45l138 138q-148 137 -349 137q-134 0 -250 -65t-186 -179q-11 -17 -53 -117q-8 -23 -30 -23h-199q-13 0 -22.5 9.5t-9.5 22.5v7q65 268 270 434.5t480 166.5 q146 0 284 -55.5t245 -156.5l130 129q19 19 45 19t45 -19t19 -45z"/></svg>
<div class="t" style="left:336px;top:490px;color:#000;">Updates</div>
<svg class="i" style="left:309.07px;top:529.86px;" width="12.86" height="15.43" viewBox="0 -1408 1280 1536"><path fill="#000" transform="scale(1,-1)" d="M1088 576v640h-448v-1137q119 63 213 137q235 184 235 360zM1280 1344v-768q0 -86 -33.5 -170.5t-83 -150t-118 -127.5t-126.5 -103t-121 -77.5t-89.5 -49.5t-42.5 -20q-12 -6 -26 -6t-26 6q-16 7 -42.5 20t-89.5 49.5t-121 77.5t-126.5 103t-118 127.5t-83 150 t-33.5 170.5v768q0 26 19 45t45 19h1152q26 0 45 -19t19 -45z"/></svg>
<div class="t" style="left:336px;top:530px;color:#000;">Firewall</div>
<svg class="i" style="left:306.89px;top:572.14px;" width="15.43" height="12.86" viewBox="0 -1280 1536 1280"><path fill="#000" transform="scale(1,-1)" d="M1040 320q0 -33 -23.5 -56.5t-56.5 -23.5t-56.5 23.5t-23.5 56.5t23.5 56.5t56.5 23.5t56.5 -23.5t23.5 -56.5zM1296 320q0 -33 -23.5 -56.5t-56.5 -23.5t-56.5 23.5t-23.5 56.5t23.5 56.5t56.5 23.5t56.5 -23.5t23.5 -56.5zM1408 160v320q0 13 -9.5 22.5t-22.5 9.5 h-1216q-13 0 -22.5 -9.5t-9.5 -22.5v-320q0 -13 9.5 -22.5t22.5 -9.5h1216q13 0 22.5 9.5t9.5 22.5zM178 640h1180l-157 482q-4 13 -16 21.5t-26 8.5h-782q-14 0 -26 -8.5t-16 -21.5zM1536 480v-320q0 -66 -47 -113t-113 -47h-1216q-66 0 -113 47t-47 113v320q0 25 16 75 l197 606q17 53 63 86t101 33h782q55 0 101 -33t63 -86l197 -606q16 -50 16 -75z"/></svg>
<div class="t" style="left:336px;top:571px;color:#000;">Disks</div>
<svg class="i" style="left:300px;top:602px;" width="32" height="30" viewBox="0 0 32 30"><path d="M10.3 22.3 A8.3 8.3 0 1 1 20.5 22.3" fill="none" stroke="#161616" stroke-width="2.4"/><path d="M12.7 24.8 C13.7 21.4 11.1 19.6 11.1 15.7 A4.3 4.3 0 1 1 19.7 15.7 C19.7 19.6 17.1 21.4 18.1 24.8" fill="none" stroke="#161616" stroke-width="2.3"/><circle cx="15.4" cy="15.6" r="1.55" fill="#000"/></svg>
<div class="t" style="left:336px;top:611px;color:#000;">Ceph</div>
<svg class="i" style="left:305.86px;top:654.43px;" width="19.29" height="11.57" viewBox="0 -1152 1920 1152"><path fill="#000" transform="scale(1,-1)" d="M1280 32q0 -13 -9.5 -22.5t-22.5 -9.5h-960q-8 0 -13.5 2t-9 7t-5.5 8t-3 11.5t-1 11.5v13v11v160v416h-192q-26 0 -45 19t-19 45q0 24 15 41l320 384q19 22 49 22t49 -22l320 -384q15 -17 15 -41q0 -26 -19 -45t-45 -19h-192v-384h576q16 0 25 -11l160 -192q7 -10 7 -21 zM1920 448q0 -24 -15 -41l-320 -384q-20 -23 -49 -23t-49 23l-320 384q-15 17 -15 41q0 26 19 45t45 19h192v384h-576q-16 0 -25 12l-160 192q-7 9 -7 20q0 13 9.5 22.5t22.5 9.5h960q8 0 13.5 -2t9 -7t5.5 -8t3 -11.5t1 -11.5v-13v-11v-160v-416h192q26 0 45 -19t19 -45z"/></svg>
<div class="t" style="left:336px;top:652px;color:#000;">Replication</div>
<svg class="i" style="left:306.5px;top:691.86px;" width="18.00" height="14.14" viewBox="0 -1408 1792 1408"><path fill="#000" transform="scale(1,-1)" d="M256 224v-192q0 -13 -9.5 -22.5t-22.5 -9.5h-192q-13 0 -22.5 9.5t-9.5 22.5v192q0 13 9.5 22.5t22.5 9.5h192q13 0 22.5 -9.5t9.5 -22.5zM256 608v-192q0 -13 -9.5 -22.5t-22.5 -9.5h-192q-13 0 -22.5 9.5t-9.5 22.5v192q0 13 9.5 22.5t22.5 9.5h192q13 0 22.5 -9.5 t9.5 -22.5zM256 992v-192q0 -13 -9.5 -22.5t-22.5 -9.5h-192q-13 0 -22.5 9.5t-9.5 22.5v192q0 13 9.5 22.5t22.5 9.5h192q13 0 22.5 -9.5t9.5 -22.5zM1792 224v-192q0 -13 -9.5 -22.5t-22.5 -9.5h-1344q-13 0 -22.5 9.5t-9.5 22.5v192q0 13 9.5 22.5t22.5 9.5h1344 q13 0 22.5 -9.5t9.5 -22.5zM256 1376v-192q0 -13 -9.5 -22.5t-22.5 -9.5h-192q-13 0 -22.5 9.5t-9.5 22.5v192q0 13 9.5 22.5t22.5 9.5h192q13 0 22.5 -9.5t9.5 -22.5zM1792 608v-192q0 -13 -9.5 -22.5t-22.5 -9.5h-1344q-13 0 -22.5 9.5t-9.5 22.5v192q0 13 9.5 22.5 t22.5 9.5h1344q13 0 22.5 -9.5t9.5 -22.5zM1792 992v-192q0 -13 -9.5 -22.5t-22.5 -9.5h-1344q-13 0 -22.5 9.5t-9.5 22.5v192q0 13 9.5 22.5t22.5 9.5h1344q13 0 22.5 -9.5t9.5 -22.5zM1792 1376v-192q0 -13 -9.5 -22.5t-22.5 -9.5h-1344q-13 0 -22.5 9.5t-9.5 22.5v192 q0 13 9.5 22.5t22.5 9.5h1344q13 0 22.5 -9.5t9.5 -22.5z"/></svg>
<div class="t" style="left:336px;top:692px;color:#000;">Task History</div>
<svg class="i" style="left:306.5px;top:731.57px;" width="18.00" height="18.00" viewBox="0 -1536 1792 1792"><path fill="#000" transform="scale(1,-1)" d="M896 1536q182 0 348 -71t286 -191t191 -286t71 -348t-71 -348t-191 -286t-286 -191t-348 -71t-348 71t-286 191t-191 286t-71 348t71 348t191 286t286 191t348 71zM896 1408q-190 0 -361 -90l194 -194q82 28 167 28t167 -28l194 194q-171 90 -361 90zM218 279l194 194 q-28 82 -28 167t28 167l-194 194q-90 -171 -90 -361t90 -361zM896 -128q190 0 361 90l-194 194q-82 -28 -167 -28t-167 28l-194 -194q171 -90 361 -90zM896 256q159 0 271.5 112.5t112.5 271.5t-112.5 271.5t-271.5 112.5t-271.5 -112.5t-112.5 -271.5t112.5 -271.5 t271.5 -112.5zM1380 473l194 -194q90 171 90 361t-90 361l-194 -194q28 -82 28 -167t-28 -167z"/></svg>
<div class="t" style="left:336px;top:733px;color:#000;">Subscription</div>
<svg class="i" style="left:448px;top:293.8px;" width="13" height="7.5" viewBox="0 0 13 7.5"><path d="M0 0 L13 0 L6.5 7.5 Z" fill="#c6c6c6"/></svg>
<svg class="i" style="left:450.8px;top:532.9px;" width="7.3" height="12.6" viewBox="0 0 7.3 12.6"><path d="M0 0 L7.3 6.3 L0 12.6 Z" fill="#c6c6c6"/></svg>
<svg class="i" style="left:450.8px;top:614.1px;" width="7.3" height="12.6" viewBox="0 0 7.3 12.6"><path d="M0 0 L7.3 6.3 L0 12.6 Z" fill="#c6c6c6"/></svg>
</nav>
<div class="g tbar">
<div style="left:494px;top:118px;width:96px;height:32px;overflow:hidden;"><div class="btn in" style="width:96px;height:33.5px;"></div></div>
<div class="t" style="left:506px;top:128px;color:#000;font-size:16.5px;line-height:16.5px;">Create</div>
<svg class="i" style="left:566.5px;top:130.5px;" width="12" height="8" viewBox="0 0 12 8"><path d="M0.8 0.9 L6 6.4 L11.2 0.9" fill="none" stroke="#bdbdbd" stroke-width="1.5"/></svg>
<div style="left:616px;top:118px;width:75px;height:32px;overflow:hidden;"><div class="btn in" style="width:75px;height:33.5px;"></div></div>
<div class="t" style="left:629.3px;top:128px;color:#000;font-size:16.5px;line-height:16.5px;">Revert</div>
<div style="left:703px;top:118px;width:53px;height:32px;overflow:hidden;"><div class="btn dis in" style="width:53px;height:33.5px;"></div></div>
<div class="t" style="left:715.3px;top:128px;color:#000;font-size:16.5px;line-height:16.5px;opacity:.5;">Edit</div>
<div style="left:768px;top:118px;width:86px;height:32px;overflow:hidden;"><div class="btn dis in" style="width:86px;height:33.5px;"></div></div>
<div class="t" style="left:781.3px;top:128px;color:#000;font-size:16.5px;line-height:16.5px;opacity:.5;">Remove</div>
</div>
<main class="g grid">
<div style="left:482px;top:158px;width:1431px;height:1px;background:#cfcfcf;"></div>
<div style="left:482px;top:159px;width:139px;height:41px;background:#eef6fb;"></div>
<div style="left:482px;top:200px;width:1431px;height:1px;background:#cfcfcf;"></div>
<div style="left:621px;top:159px;width:1px;height:41px;background:#cfcfcf;"></div>
<div style="left:788px;top:159px;width:1px;height:41px;background:#cfcfcf;"></div>
<div style="left:900px;top:159px;width:1px;height:41px;background:#cfcfcf;"></div>
<div style="left:1012px;top:159px;width:1px;height:41px;background:#cfcfcf;"></div>
<div style="left:1123px;top:159px;width:1px;height:41px;background:#cfcfcf;"></div>
<div style="left:1263px;top:159px;width:1px;height:41px;background:#cfcfcf;"></div>
<div style="left:1430px;top:159px;width:1px;height:41px;background:#cfcfcf;"></div>
<div style="left:1598px;top:159px;width:1px;height:41px;background:#cfcfcf;"></div>
<div style="left:1765px;top:159px;width:1px;height:41px;background:#cfcfcf;"></div>
<div class="t" style="left:496px;top:172px;color:#666;">Name</div>
<div class="t" style="left:636px;top:172px;color:#666;">Type</div>
<div class="t" style="left:803px;top:172px;color:#666;">Active</div>
<div class="t" style="left:915px;top:172px;color:#666;">Autostart</div>
<div class="t" style="left:1027px;top:172px;color:#666;">VLAN a…</div>
<div class="t" style="left:1138px;top:172px;color:#666;">Ports/Slaves</div>
<div class="t" style="left:1278px;top:172px;color:#666;">IP address</div>
<div class="t" style="left:1445px;top:172px;color:#666;">Subnet mask</div>
<div class="t" style="left:1613px;top:172px;color:#666;">Gateway</div>
<div class="t" style="left:1780px;top:172px;color:#666;">Comment</div>
<svg class="i" style="left:550px;top:170px;" width="13" height="20" viewBox="0 0 13 20"><path d="M6.5 1 L6.5 20 M0.8 7.2 L6.5 1.2 L12.2 7.2" fill="none" stroke="#a6a6a6" stroke-width="1.35"/></svg>
<div style="left:482px;top:235px;width:1431px;height:1px;background:#cfcfcf;"></div>
<div class="t" style="left:496px;top:212px;color:#000;">enp2s0</div>
<div class="t" style="left:636px;top:212px;color:#000;">Network Device</div>
<div class="t" style="left:803px;top:212px;color:#000;">Yes</div>
<div class="t" style="left:915px;top:212px;color:#000;">Yes</div>
<div class="t" style="left:1027px;top:212px;color:#000;">No</div>
<div class="t" style="left:1278px;top:212px;color:#000;">174.128.229.1…</div>
<div class="t" style="left:1613px;top:212px;color:#000;">174.128.229.129</div>
<div class="t" style="left:1780px;top:212px;color:#000;">dns-* option…</div>
<div style="left:482px;top:236px;width:1431px;height:34px;background:#fafafa;"></div>
<div style="left:482px;top:270px;width:1431px;height:1px;background:#cfcfcf;"></div>
<div class="t" style="left:496px;top:246px;color:#000;">enp3s0</div>
<div class="t" style="left:636px;top:246px;color:#000;">Network Device</div>
<div class="t" style="left:803px;top:246px;color:#000;">No</div>
<div class="t" style="left:915px;top:246px;color:#000;">No</div>
<div class="t" style="left:1027px;top:246px;color:#000;">No</div>
<div style="left:482px;top:304px;width:1431px;height:1px;background:#cfcfcf;"></div>
<div class="t" style="left:496px;top:281px;color:#000;">enp4s0</div>
<div class="t" style="left:636px;top:281px;color:#000;">Network Device</div>
<div class="t" style="left:803px;top:281px;color:#000;">No</div>
<div class="t" style="left:915px;top:281px;color:#000;">No</div>
<div class="t" style="left:1027px;top:281px;color:#000;">No</div>
<div style="left:482px;top:305px;width:1431px;height:34px;background:#fafafa;"></div>
<div style="left:482px;top:339px;width:1431px;height:1px;background:#cfcfcf;"></div>
<div class="t" style="left:496px;top:315px;color:#000;">enp5s0</div>
<div class="t" style="left:636px;top:315px;color:#000;">Network Device</div>
<div class="t" style="left:803px;top:315px;color:#000;">No</div>
<div class="t" style="left:915px;top:315px;color:#000;">No</div>
<div class="t" style="left:1027px;top:315px;color:#000;">No</div>
</main>
<footer class="g south">
<div style="left:927px;top:1010px;width:66px;height:7px;background:#dfdfdf;box-shadow:inset 1px 0 0 #e6e6e6,inset -1px 0 0 #e6e6e6;"></div>
<svg class="i" style="left:954.4px;top:1012.8px;" width="12.5" height="4.2" viewBox="0 0 12.5 4.2"><path d="M0 0 L12.5 0 L8.4 4.2 L4.1 4.2 Z" fill="#c6c6c6"/></svg>
<div style="left:7px;top:1017px;width:1906px;height:55px;background:#f5f5f5;"></div>
<div style="left:22px;top:1025px;width:71px;height:32px;background:#3892d4;border-radius:3.5px;"></div>
<div class="t" style="left:34px;top:1034px;color:#fff;">Tasks</div>
<div class="t" style="left:120px;top:1034px;color:#000;">Cluster log</div>
<div style="left:8px;top:1066px;width:1905px;height:1px;background:#cfcfcf;"></div>
<div style="left:8px;top:1067px;width:1904px;height:5px;background:#fff;"></div>
<div style="left:8px;top:1067px;width:208px;height:5px;background:#eef6fb;"></div>
<div style="left:216px;top:1067px;width:1px;height:5px;background:#cfcfcf;"></div>
<div style="left:426px;top:1067px;width:1px;height:5px;background:#cfcfcf;"></div>
<div style="left:565px;top:1067px;width:1px;height:5px;background:#cfcfcf;"></div>
<div style="left:774px;top:1067px;width:1px;height:5px;background:#cfcfcf;"></div>
<div style="left:1634px;top:1067px;width:1px;height:5px;background:#cfcfcf;"></div>
</footer>
</div>
</body>
</html>
